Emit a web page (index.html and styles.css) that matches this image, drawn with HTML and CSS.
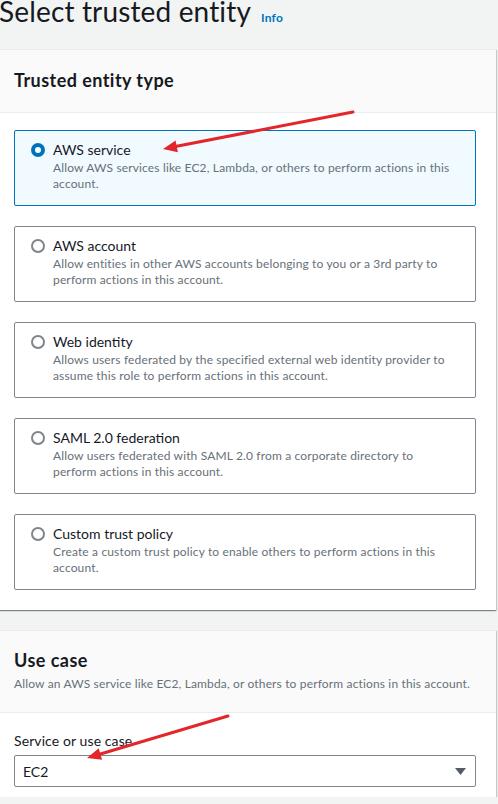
FILE: index.html
```html
<!DOCTYPE html>
<html lang="en">
<head>
<meta charset="utf-8">
<title>Select trusted entity</title>
<link rel="stylesheet" href="styles.css">
</head>
<body>
<div class="page">
  <div class="title-row">
    <h1 class="title">Select trusted entity</h1>
    <a class="info">Info</a>
  </div>

  <section class="container">
    <div class="container-header">
      <h2 class="heading">Trusted entity type</h2>
    </div>
    <div class="container-body">
      <div class="tiles">
        <div class="tile selected">
          <span class="radio checked"></span>
          <div class="tile-text">
            <div class="tile-title">AWS service</div>
            <div class="tile-desc">Allow AWS services like EC2, Lambda, or others to perform actions in this account.</div>
          </div>
        </div>
        <div class="tile">
          <span class="radio"></span>
          <div class="tile-text">
            <div class="tile-title">AWS account</div>
            <div class="tile-desc">Allow entities in other AWS accounts belonging to you or a 3rd party to perform actions in this account.</div>
          </div>
        </div>
        <div class="tile">
          <span class="radio"></span>
          <div class="tile-text">
            <div class="tile-title">Web identity</div>
            <div class="tile-desc">Allows users federated by the specified external web identity provider to assume this role to perform actions in this account.</div>
          </div>
        </div>
        <div class="tile">
          <span class="radio"></span>
          <div class="tile-text">
            <div class="tile-title">SAML 2.0 federation</div>
            <div class="tile-desc">Allow users federated with SAML 2.0 from a corporate directory to perform actions in this account.</div>
          </div>
        </div>
        <div class="tile">
          <span class="radio"></span>
          <div class="tile-text">
            <div class="tile-title">Custom trust policy</div>
            <div class="tile-desc">Create a custom trust policy to enable others to perform actions in this account.</div>
          </div>
        </div>
      </div>
    </div>
  </section>

  <section class="container second">
    <div class="container-header stacked">
      <h2 class="heading">Use case</h2>
      <p class="header-desc">Allow an AWS service like EC2, Lambda, or others to perform actions in this account.</p>
    </div>
    <div class="container-body field">
      <div class="field-label">Service or use case</div>
      <div class="select">
        <span class="select-value">EC2</span>
        <svg class="caret" width="11" height="7" viewBox="0 0 11 7"><polygon points="0,0 11,0 5.5,7" fill="#545b64"/></svg>
      </div>
    </div>
  </section>

  <svg class="annotations" width="498" height="804" viewBox="0 0 498 804">
    <line x1="353" y1="119" x2="176.7" y2="153.3" stroke="#e3262b" stroke-width="3" stroke-linecap="round"/>
    <polygon points="163,156 175.6,147.4 177.85,159.2" fill="#e3262b"/>
    <line x1="228" y1="723" x2="100.4" y2="761" stroke="#e3262b" stroke-width="3" stroke-linecap="round"/>
    <polygon points="87,765 98.7,755.2 102.1,766.8" fill="#e3262b"/>
  </svg>
</div>
</body>
</html>
```

FILE: styles.css
```css
* { box-sizing: border-box; }

html, body {
  margin: 0;
  padding: 0;
  background: #f2f3f3;
  overflow: hidden;
}

body {
  font-family: Lato, "Liberation Sans", sans-serif;
  color: #16191f;
}

.page {
  position: relative;
  width: 498px;
  height: 804px;
}

.title-row {
  display: flex;
  align-items: baseline;
  gap: 10px;
  height: 36px;
  margin-top: -7px;
  margin-left: -1px;
}

.title {
  margin: 0;
  font-size: 28px;
  line-height: 36px;
  font-weight: 400;
  letter-spacing: 0.15px;
  color: #16191f;
}

.info {
  font-size: 12px;
  font-weight: 700;
  letter-spacing: 0.2px;
  color: #0073bb;
}

.container {
  margin-top: 20px;
  margin-left: -6px;
  width: 502px;
  background: #fff;
  box-shadow: 0 1px 1px 0 rgba(0, 28, 36, 0.3), 1px 1px 1px 0 rgba(0, 28, 36, 0.15), -1px 1px 1px 0 rgba(0, 28, 36, 0.15);
  border-top: 1px solid #eaeded;
}

.container.second {
  margin-top: 20px;
}

.container-header {
  background: #fafafa;
  height: 63px;
  padding: 0 20px 3px;
  display: flex;
  align-items: center;
  border-bottom: 1px solid #eaeded;
}

.container-header.stacked {
  height: auto;
  display: block;
  padding: 18px 20px 20px;
}

.heading {
  margin: 0;
  font-size: 18px;
  line-height: 22px;
  font-weight: 700;
  letter-spacing: 0.45px;
  color: #16191f;
}

.header-desc {
  margin: 5px 0 0;
  font-size: 12px;
  line-height: 16px;
  letter-spacing: 0.15px;
  color: #687078;
}

.container-body {
  padding: 17px 20px 20px;
}

.tiles {
  display: flex;
  flex-direction: column;
  gap: 20px;
}

.tile {
  display: flex;
  align-items: flex-start;
  gap: 8px;
  height: 76px;
  padding: 9px 16px 13px;
  border: 1px solid #7d868f;
  border-radius: 2px;
  background: #fff;
}

.tile.selected {
  border-color: #0073bb;
  background: #f1faff;
}

.radio {
  flex: none;
  width: 14px;
  height: 14px;
  margin-top: 3px;
  border-radius: 50%;
  border: 2px solid #7d868f;
  background: #fff;
}

.radio.checked {
  border: 4px solid #0073bb;
}

.tile-title {
  font-size: 14px;
  line-height: 20px;
  color: #16191f;
}

.tile-desc {
  font-size: 12px;
  line-height: 16px;
  letter-spacing: 0.15px;
  color: #687078;
}

.field {
  padding: 18px 20px 20px;
}

.field-label {
  font-size: 14px;
  line-height: 20px;
  letter-spacing: 0.1px;
  color: #16191f;
}

.select {
  margin-top: 4px;
  height: 32px;
  display: flex;
  align-items: center;
  justify-content: space-between;
  padding: 0 9px 0 8px;
  border: 1px solid #7d868f;
  border-radius: 2px;
  background: #fff;
}

.select-value {
  font-size: 14px;
  color: #16191f;
}

.annotations {
  position: absolute;
  left: 0;
  top: 0;
  pointer-events: none;
}
```
